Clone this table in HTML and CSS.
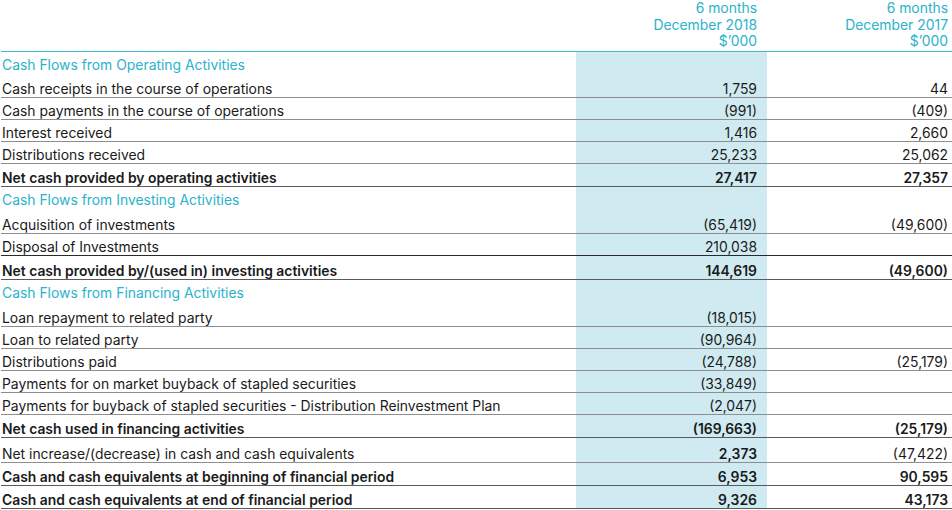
FILE: index.html
```html
<!DOCTYPE html>
<html>
<head>
<meta charset="utf-8">
<link rel="stylesheet" href="styles.css">
</head>
<body>
<div class="sheet">
  <div class="row head">
    <div class="lab"></div>
    <div class="num cur"><span>6 months</span><span>December 2018</span><span>$’000</span></div>
    <div class="num prev"><span>6 months</span><span>December 2017</span><span>$’000</span></div>
  </div>

  <div class="row sec"><div class="lab">Cash Flows from Operating Activities</div><div class="num cur"></div><div class="num prev"></div></div>
  <div class="row item"><div class="lab">Cash receipts in the course of operations</div><div class="num cur">1,759</div><div class="num prev">44</div></div>
  <div class="row item"><div class="lab">Cash payments in the course of operations</div><div class="num cur">(991)</div><div class="num prev">(409)</div></div>
  <div class="row item"><div class="lab">Interest received</div><div class="num cur">1,416</div><div class="num prev">2,660</div></div>
  <div class="row item"><div class="lab">Distributions received</div><div class="num cur">25,233</div><div class="num prev">25,062</div></div>
  <div class="row total"><div class="lab">Net cash provided by operating activities</div><div class="num cur">27,417</div><div class="num prev">27,357</div></div>

  <div class="row sec"><div class="lab">Cash Flows from Investing Activities</div><div class="num cur"></div><div class="num prev"></div></div>
  <div class="row item first"><div class="lab">Acquisition of investments</div><div class="num cur">(65,419)</div><div class="num prev">(49,600)</div></div>
  <div class="row item dark"><div class="lab">Disposal of Investments</div><div class="num cur">210,038</div><div class="num prev"></div></div>
  <div class="row total big"><div class="lab">Net cash provided by/(used in) investing activities</div><div class="num cur">144,619</div><div class="num prev">(49,600)</div></div>

  <div class="row sec"><div class="lab">Cash Flows from Financing Activities</div><div class="num cur"></div><div class="num prev"></div></div>
  <div class="row item first"><div class="lab">Loan repayment to related party</div><div class="num cur">(18,015)</div><div class="num prev"></div></div>
  <div class="row item"><div class="lab">Loan to related party</div><div class="num cur">(90,964)</div><div class="num prev"></div></div>
  <div class="row item"><div class="lab">Distributions paid</div><div class="num cur">(24,788)</div><div class="num prev">(25,179)</div></div>
  <div class="row item"><div class="lab">Payments for on market buyback of stapled securities</div><div class="num cur">(33,849)</div><div class="num prev"></div></div>
  <div class="row item"><div class="lab">Payments for buyback of stapled securities - Distribution Reinvestment Plan</div><div class="num cur">(2,047)</div><div class="num prev"></div></div>
  <div class="row total"><div class="lab">Net cash used in financing activities</div><div class="num cur">(169,663)</div><div class="num prev">(25,179)</div></div>

  <div class="row item net"><div class="lab">Net increase/(decrease) in cash and cash equivalents</div><div class="num cur strong">2,373</div><div class="num prev">(47,422)</div></div>
  <div class="row total"><div class="lab">Cash and cash equivalents at beginning of financial period</div><div class="num cur">6,953</div><div class="num prev">90,595</div></div>
  <div class="row total"><div class="lab">Cash and cash equivalents at end of financial period</div><div class="num cur">9,326</div><div class="num prev">43,173</div></div>
</div>
</body>
</html>
```

FILE: styles.css
```css
html, body {
  margin: 0;
  padding: 0;
  background: #ffffff;
}

body {
  font-family: "Inter", "Liberation Sans", sans-serif;
  font-size: 13.9px;
  color: #1a1a1a;
}

.sheet {
  width: 951px;
  margin-left: 1px;
}

.row {
  display: grid;
  grid-template-columns: 575px 191px 1fr;
  box-sizing: border-box;
  border-bottom: 1px solid #8e8e8e;
}

.row > div {
  display: flex;
  align-items: flex-end;
  line-height: 16px;
}

.lab {
  padding-left: 1px;
  white-space: nowrap;
}

.num {
  justify-content: flex-end;
  white-space: nowrap;
}

.cur {
  background: #d0eaf1;
  padding-right: 10px;
}

.prev {
  padding-right: 4px;
}

.head {
  height: 52px;
  border-bottom: 1px solid #3cbcd3;
}

.head .num {
  flex-direction: column;
  align-items: flex-end;
  justify-content: flex-start;
  color: #2ab3cb;
  line-height: 16.6px;
}

.head .cur {
  background: transparent;
}

.sec {
  height: 24px;
  border-bottom: none;
}

.sec > div {
  align-items: center;
  line-height: 19px;
}

.sec .lab {
  color: #2ab3cb;
  padding-top: 3px;
}

.item {
  height: 22px;
}

.item.first {
  height: 23px;
}

.item.dark {
  border-bottom-color: #2a2a2a;
}

.total {
  height: 23px;
  font-weight: 600;
  border-bottom-color: #5a5a5a;
}

.total.big {
  height: 24px;
}

.net {
  height: 25px;
}

.strong {
  font-weight: 600;
}
```
